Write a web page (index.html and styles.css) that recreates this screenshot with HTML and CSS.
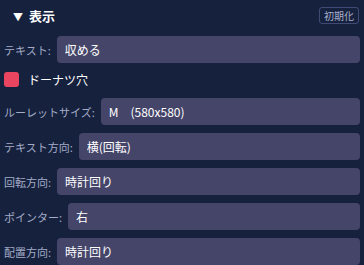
FILE: index.html
```html
<!DOCTYPE HTML>
<html>
<head>
<title>表示設定</title>
<link rel="stylesheet" href="styles.css">
</head>
<body>
  <div class="panel">
    <div class="header">
      <span class="title"><span class="arrow">▼</span>表示</span>
      <button class="reset">初期化</button>
    </div>
    <div class="row"><label>テキスト:</label><select class="field"><option>収める</option></select></div>
    <div class="check-row"><span class="box"></span><span class="check-label">ドーナツ穴</span></div>
    <div class="row"><label>ルーレットサイズ:</label><select class="field"><option>M　(580x580)</option></select></div>
    <div class="row"><label>テキスト方向:</label><select class="field"><option>横(回転)</option></select></div>
    <div class="row"><label>回転方向:</label><select class="field"><option>時計回り</option></select></div>
    <div class="row"><label>ポインター:</label><select class="field"><option>右</option></select></div>
    <div class="row"><label>配置方向:</label><select class="field"><option>時計回り</option></select></div>
  </div>
</body>
</html>
```

FILE: styles.css
```css
body {
  margin: 0;
  background: #16213e;
  font-family: "Noto Sans CJK JP", "Noto Sans", sans-serif;
  font-size: 11px;
  color: #ffffff;
}

.panel {
  display: flex;
  flex-direction: column;
  gap: 8px;
  padding: 3px 4px 0 4px;
}

.header {
  display: flex;
  align-items: center;
  justify-content: space-between;
  height: 25px;
}

.title {
  font-weight: bold;
  font-size: 13px;
  padding-left: 9px;
}

.arrow {
  font-size: 10px;
  margin-right: 6px;
}

.reset {
  background: transparent;
  border: 1px solid #414a74;
  border-radius: 3px;
  color: #a8b0cc;
  font-family: inherit;
  font-size: 10px;
  height: 17px;
  padding: 0 4px;
  margin-right: 1px;
  line-height: 14px;
}

.row {
  display: flex;
  align-items: center;
  gap: 6px;
}

.row label {
  color: #a4acc8;
  white-space: nowrap;
}

.field {
  flex: 1;
  appearance: none;
  -webkit-appearance: none;
  background: #45456a;
  border: none;
  border-radius: 4px;
  color: #ffffff;
  font-family: inherit;
  font-size: 12px;
  height: 27px;
  padding: 0 8px;
}

.check-row {
  display: flex;
  align-items: center;
  gap: 9px;
  height: 17px;
  margin-bottom: 2px;
  font-size: 12px;
}

.box {
  width: 15px;
  height: 15px;
  border-radius: 3px;
  background: #e94560;
}
```
